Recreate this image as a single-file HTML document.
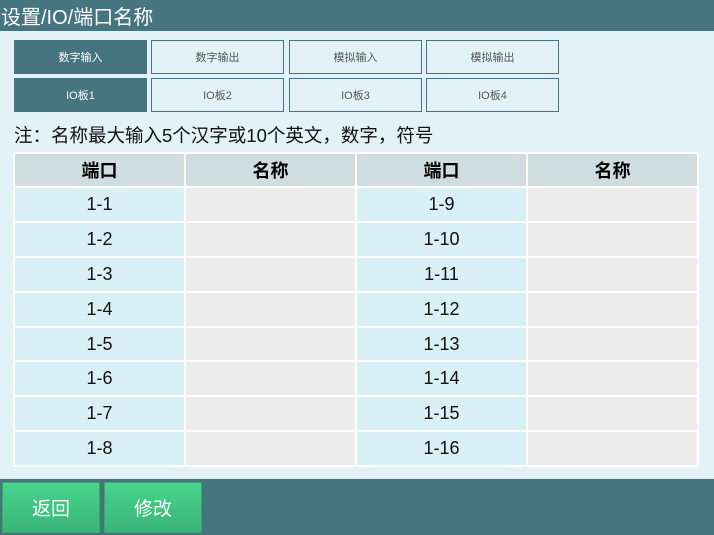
<!DOCTYPE html>
<html><head><meta charset="utf-8"><style>
*{margin:0;padding:0;box-sizing:border-box}
body{width:714px;height:535px;overflow:hidden;background:#e3f2f7;font-family:"Liberation Sans","Noto Sans CJK SC",sans-serif;position:relative}
.top{position:absolute;left:0;top:0;width:714px;height:31px;background:#477481;color:#fff;font-size:20px;line-height:40px;padding-left:1px;overflow:hidden}
.top span{position:relative;top:-2px}
.b{position:absolute;height:34px;border:1px solid #477481;background:#e3f2f7;color:#555;font-size:11px;display:flex;align-items:center;justify-content:center}
.b.on{background:#477481;color:#fff}
.note{position:absolute;left:14px;top:122px;font-size:18.5px;color:#111;white-space:nowrap}
table{position:absolute;left:13px;top:152px;border-collapse:separate;border-spacing:2px 2px;background:#fff}
td{width:169px;height:32.9px;text-align:center;font-size:18px;color:#111;padding:0}
th{height:32px;background:#cfdde1;font-size:18px;font-weight:bold;color:#000}
td.p{background:#d9f0f6}td.n{background:#ececec}
.bot{position:absolute;left:0;top:479px;width:714px;height:56px;background:#477481}
.g{position:absolute;top:482px;width:98px;height:51px;background:linear-gradient(#47d48c,#3db479);border:1px solid #3aa86e;color:#fff;font-size:19px;display:flex;align-items:center;justify-content:center;box-shadow:0 0 2px #2d8a5a}
</style></head><body>
<div class="top"><span>设置/IO/端口名称</span></div>
<div class="b on" style="left:14px;top:40px;width:133px">数字输入</div>
<div class="b" style="left:151px;top:40px;width:133px">数字输出</div>
<div class="b" style="left:289px;top:40px;width:133px">模拟输入</div>
<div class="b" style="left:426px;top:40px;width:133px">模拟输出</div>
<div class="b on" style="left:14px;top:78px;width:133px">IO板1</div>
<div class="b" style="left:151px;top:78px;width:133px">IO板2</div>
<div class="b" style="left:289px;top:78px;width:133px">IO板3</div>
<div class="b" style="left:426px;top:78px;width:133px">IO板4</div>
<div class="note">注：名称最大输入5个汉字或10个英文，数字，符号</div>
<table>
<tr><th>端口</th><th>名称</th><th>端口</th><th>名称</th></tr>
<tr><td class="p">1-1</td><td class="n"></td><td class="p">1-9</td><td class="n"></td></tr>
<tr><td class="p">1-2</td><td class="n"></td><td class="p">1-10</td><td class="n"></td></tr>
<tr><td class="p">1-3</td><td class="n"></td><td class="p">1-11</td><td class="n"></td></tr>
<tr><td class="p">1-4</td><td class="n"></td><td class="p">1-12</td><td class="n"></td></tr>
<tr><td class="p">1-5</td><td class="n"></td><td class="p">1-13</td><td class="n"></td></tr>
<tr><td class="p">1-6</td><td class="n"></td><td class="p">1-14</td><td class="n"></td></tr>
<tr><td class="p">1-7</td><td class="n"></td><td class="p">1-15</td><td class="n"></td></tr>
<tr><td class="p">1-8</td><td class="n"></td><td class="p">1-16</td><td class="n"></td></tr>
</table>
<div class="bot"></div>
<div class="g" style="left:2px">返回</div>
<div class="g" style="left:104px">修改</div>
</body></html>
